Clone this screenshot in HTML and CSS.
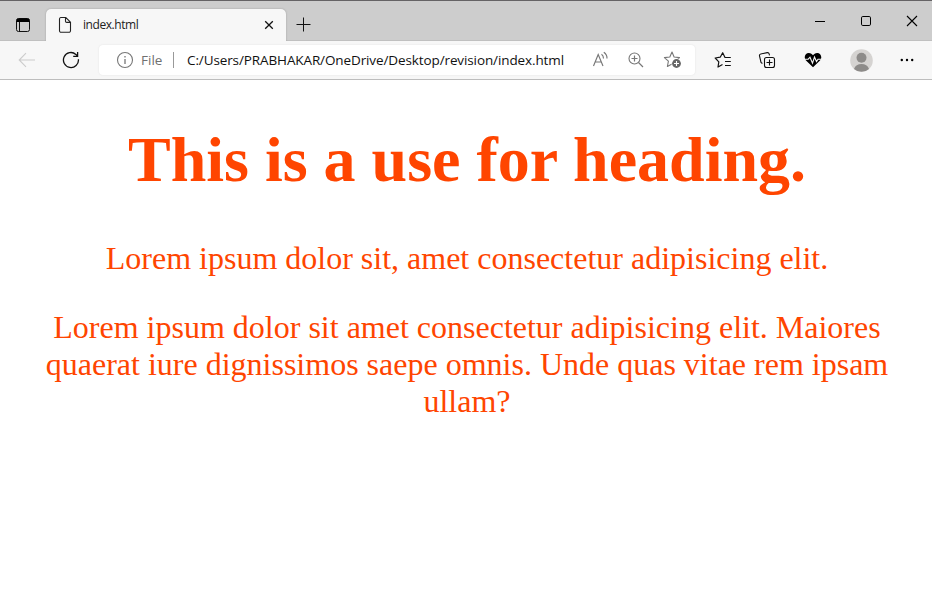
FILE: index.html
```html
<!DOCTYPE html>
<html lang="en">
<head>
<meta charset="utf-8">
<title>index.html</title>
<link rel="stylesheet" href="styles.css">
</head>
<body>
<header class="tabs">
  <svg class="panel-icon" width="16" height="16" viewBox="0 0 16 16"><rect x="1.5" y="1.5" width="13" height="13" rx="2" fill="none" stroke="#111"/><path d="M1.5 5V3.5a2 2 0 0 1 2-2h9a2 2 0 0 1 2 2V5z" fill="#000"/><path d="M4.5 5v9.5" stroke="#111"/></svg>
  <div class="tab">
    <svg class="page-icon" width="14" height="18" viewBox="0 0 14 18"><path d="M2.8 1.5h5l4.7 4.7v8.5a1.6 1.6 0 0 1-1.6 1.6H3.1a1.6 1.6 0 0 1-1.6-1.6V3.1a1.6 1.6 0 0 1 1.3-1.6zM7.5 1.5v3.7a1.2 1.2 0 0 0 1.2 1.2h3.8" fill="none" stroke="#222" stroke-width="1.1"/></svg>
    <span class="tab-title">index.html</span>
    <svg class="tab-close" width="10" height="10" viewBox="0 0 10 10"><path d="M1.2 1.2l7.6 7.6M8.8 1.2L1.2 8.8" stroke="#111" stroke-width="1.3"/></svg>
  </div>
  <svg class="new-tab" width="15" height="15" viewBox="0 0 15 15"><path d="M.5 7.5h14M7.5.5v14" stroke="#111"/></svg>
  <div class="window-buttons">
    <svg width="12" height="12" viewBox="0 0 12 12"><path d="M1 6.5h10" stroke="#000"/></svg>
    <svg width="12" height="12" viewBox="0 0 12 12"><rect x="1.5" y="1.5" width="9" height="9" rx="1.3" fill="none" stroke="#000"/></svg>
    <svg width="12" height="12" viewBox="0 0 12 12"><path d="M1 1l10 10M11 1L1 11" stroke="#000" stroke-width="1.1"/></svg>
  </div>
</header>
<nav class="toolbar">
  <svg class="back" width="18" height="16" viewBox="0 0 18 16"><path d="M17 8H1.5M8 1.2L1.2 8 8 14.8" fill="none" stroke="#cbcbcb" stroke-width="1.1"/></svg>
  <svg class="reload" width="18" height="18" viewBox="0 0 18 18"><path d="M16.4 8.2A7.5 7.5 0 1 1 13.9 3.4L15.5 5M15.6 1v4.3h-4.4" fill="none" stroke="#111" stroke-width="1.3"/></svg>
  <div class="address">
    <svg class="info" width="18" height="18" viewBox="0 0 18 18"><circle cx="9" cy="9" r="7.5" fill="none" stroke="#777" stroke-width="1.1"/><path d="M9 8v5M9 5v1.5" stroke="#777" stroke-width="1.3"/></svg>
    <span class="scheme">File</span>
    <span class="divider"></span>
    <span class="url">C:/Users/PRABHAKAR/OneDrive/Desktop/revision/index.html</span>
    <svg class="read" width="18" height="18" viewBox="0 0 18 18"><path d="M1.5 15L6.2 3.5 11 15M3.2 11h6.2M9.5 3.3q2 1.4 2 4.2M11.8 1.2q3.4 2.3 3.2 6.3" fill="none" stroke="#777" stroke-width="1.15"/></svg>
    <svg class="zoom" width="18" height="18" viewBox="0 0 18 18"><circle cx="7.5" cy="7.5" r="5.5" fill="none" stroke="#777" stroke-width="1.1"/><path d="M11.5 11.5l4.5 4.5M4.5 7.5h6M7.5 4.5v6" stroke="#777" stroke-width="1.2"/></svg>
    <svg class="fav-add" width="20" height="20" viewBox="0 0 20 20"><path d="M9 2l2.1 5 5.4.6-4 3.5 1 5.2L9 14l-4.6 2.5 1-5.4-4-3.5 5.4-.6z" fill="none" stroke="#777" stroke-width="1.1" stroke-linejoin="round"/><circle cx="13.5" cy="13.5" r="5" fill="#fff"/><circle cx="13.5" cy="13.5" r="4.4" fill="#666"/><path d="M11 13.5h5M13.5 11v5" stroke="#fff" stroke-width="1.1"/></svg>
  </div>
  <svg class="favorites" width="18" height="18" viewBox="0 0 18 18"><path d="M8.5 13.500L4 16l.8-5.200-3.600-3.800 5-.8L8.700 1.700l2.300 4.800h5.800M11 10.500h5.800M11 14.500h5.800" fill="none" stroke="#111" stroke-width="1.2" stroke-linejoin="round"/></svg>
  <svg class="collections" width="18" height="18" viewBox="0 0 18 18"><rect x="6.5" y="6.5" width="10" height="10" rx="2" fill="none" stroke="#111" stroke-width="1.1"/><path d="M11.5 8.5v6M8.5 11.5h6M4.4 12.5L3 11.4 1.5 5a1.7 1.7 0 0 1 1.3-2l6.4-1.4a1.8 1.8 0 0 1 2 1.4l.3 1.3" fill="none" stroke="#111" stroke-width="1.1"/></svg>
  <svg class="health" width="18" height="16" viewBox="0 0 18 16"><path d="M9 15.3L2 8.5C-.7 5.5 1.2 1 4.800 1 6.700 1 8.200 2 9 3.300 9.800 2 11.300 1 13.200 1c3.600 0 5.500 4.500 2.800 7.500z" fill="#000"/><path d="M0 7.200h4.200l1.800-2 2.500 6 2-6.200 2 4.500 1.500-2.300h4" fill="none" stroke="#f7f7f7" stroke-width="1.100"/></svg>
  <svg class="profile" width="23" height="23" viewBox="0 0 23 23"><circle cx="11.500" cy="11.500" r="11.300" fill="#d5d3d1"/><circle cx="11.500" cy="8.700" r="5" fill="#8d8b89"/><path d="M4 19.900c1-3.300 4-4.900 7.500-4.900s6.500 1.600 7.500 4.900a11.300 11.300 0 0 1-15 0z" fill="#8d8b89"/></svg>
  <svg class="more" width="14" height="4" viewBox="0 0 14 4"><circle cx="1.800" cy="2" r="1.200"/><circle cx="7" cy="2" r="1.200"/><circle cx="12.200" cy="2" r="1.200"/></svg>
</nav>
<main class="page">
  <h1>This is a use for heading.</h1>
  <p>Lorem ipsum dolor sit, amet consectetur adipisicing elit.</p>
  <p>Lorem ipsum dolor sit amet consectetur adipisicing elit. Maiores quaerat iure dignissimos saepe omnis. Unde quas vitae rem ipsam ullam?</p>
</main>
</body>
</html>
```
FILE: styles.css
```css
* { box-sizing: border-box; }
body { margin: 0; background: #fff; overflow: hidden; font-family: "Open Sans", "Noto Sans", sans-serif; }
svg { display: block; flex: none; }
.tabs { height: 41px; display: flex; align-items: flex-start; background: #cdcdcd; border-top: 1px solid #656365; box-shadow: inset 0 -1px #c0c0c0; }
.panel-icon { margin: 16px 0 0 15px; }
.tab { width: 240px; height: 32px; margin: 8px 0 0 15px; display: flex; align-items: center; background: #f7f7f7; border-radius: 5px 5px 0 0; box-shadow: 0 0 2px #999; clip-path: inset(-2px -2px 0 -2px); }
.page-icon { margin-left: 12px; }
.tab-title { width: 181px; margin-left: 11px; font-size: 12px; line-height: 16px; color: #222; letter-spacing: -0.44px; }
.new-tab { margin: 16px 0 0 10px; }
.window-buttons { display: flex; gap: 34px; margin: 14px 14px 0 auto; }
.toolbar { height: 39px; display: flex; align-items: center; background: #f7f7f7; border-bottom: 1px solid #bdbdbd; }
.back { margin-left: 18px; }
.reload { margin-left: 26px; }
.address { width: 596px; height: 30px; margin-left: 19px; display: flex; align-items: center; background: #fff; border-radius: 4px; box-shadow: 0 0 2px #e0e0e0; white-space: nowrap; line-height: 18px; }
.info { margin-left: 17px; }
.scheme { width: 24px; margin-left: 7px; color: #707070; font-size: 13.5px; }
.divider { width: 1px; height: 16px; margin-left: 8px; background: #999; }
.url { width: 378px; margin-left: 13px; color: #111; font-size: 13.5px; letter-spacing: -0.11px; }
.read { margin-left: 27px; }
.zoom { margin-left: 17px; }
.fav-add { margin-left: 18px; }
.favorites { margin-left: 19px; }
.collections { margin-left: 26px; }
.health { margin-left: 28px; }
.profile { margin-left: 28px; }
.more { margin-left: 27px; }
.page { padding: 43px 7px 0 9px; color: #ff4500; font-family: "Liberation Serif", serif; font-size: 32px; line-height: 37px; text-align: center; }
h1 { margin: 0 0 43px; font-size: 64px; line-height: 74px; }
p { margin: 0 0 32px; }
```
